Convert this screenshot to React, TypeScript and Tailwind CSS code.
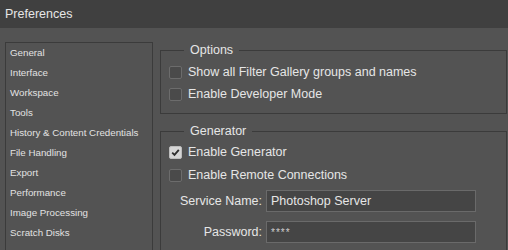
import { ReactNode } from 'react'

const sections = [
    'General',
    'Interface',
    'Workspace',
    'Tools',
    'History & Content Credentials',
    'File Handling',
    'Export',
    'Performance',
    'Image Processing',
    'Scratch Disks',
    'Type',
]

function Checkbox({ checked = false }: { checked?: boolean }) {
    return (
        <span
            className={
                checked
                    ? 'flex h-[13px] w-[13px] shrink-0 items-center justify-center rounded-[2px] border border-[#bdbdbd] bg-[#d6d6d6]'
                    : 'flex h-[13px] w-[13px] shrink-0 items-center justify-center rounded-[2px] border border-[#6c6c6c] bg-[#4a4a4a]'
            }
        >
            {checked && (
                <svg width="9" height="9" viewBox="0 0 9 9" fill="none">
                    <path d="M1.2 4.6 L3.5 6.9 L7.8 1.8" stroke="#2e2e2e" strokeWidth="1.8" />
                </svg>
            )}
        </span>
    )
}

function CheckRow({ label, checked }: { label: string; checked?: boolean }) {
    return (
        <label className="flex h-[22px] items-center gap-[6px]">
            <Checkbox checked={checked} />
            <span>{label}</span>
        </label>
    )
}

function Group({ title, children, className }: { title: string; children: ReactNode; className?: string }) {
    return (
        <fieldset className={'border border-[#3b3b3b] pl-[8px] ' + (className ?? '')}>
            <legend className="ml-[15px] px-[6px] leading-[16px]">{title}</legend>
            {children}
        </fieldset>
    )
}

function Field({ label, value, small }: { label: string; value: string; small?: boolean }) {
    return (
        <div className="flex items-center">
            <span className="w-[97px] shrink-0 pr-[4px] text-right">{label}</span>
            <div
                className={
                    'flex h-[22px] w-[210px] items-center border border-[#6a6a6a] bg-[#454545] pl-[4px] ' +
                    (small ? 'text-[10px] tracking-[1px] text-[#cfcfcf]' : '')
                }
            >
                {value}
            </div>
        </div>
    )
}

export default function App() {
    return (
        <div
            className="flex h-[250px] w-[508px] flex-col overflow-hidden bg-[#535353] text-[#e6e6e6]"
            style={{ fontFamily: '"Liberation Sans", Arial, sans-serif' }}
        >
            <div className="flex h-[28px] shrink-0 items-center bg-[#404040] pl-[5px] text-[12.5px]">
                Preferences
            </div>
            <div className="flex flex-1 pt-[14px] pl-[5px] pr-[1px]">
                <nav className="w-[148px] shrink-0 border border-b-0 border-[#3b3b3b] pl-[4px] text-[9.75px] text-[#e2e2e2]">
                    {sections.map((s) => (
                        <div key={s} className="flex h-[20px] items-center">
                            {s}
                        </div>
                    ))}
                </nav>
                <div className="ml-[7px] flex flex-1 flex-col text-[12.5px]">
                    <Group title="Options" className="pt-[3px] pb-[8px]">
                        <CheckRow label="Show all Filter Gallery groups and names" />
                        <CheckRow label="Enable Developer Mode" />
                    </Group>
                    <Group title="Generator" className="mt-[9px] flex-1">
                        <div className="flex flex-col gap-[1px] pt-[2px]">
                            <CheckRow label="Enable Generator" checked />
                            <CheckRow label="Enable Remote Connections" />
                        </div>
                        <div className="mt-[4px] flex flex-col gap-[9px]">
                            <Field label="Service Name:" value="Photoshop Server" />
                            <Field label="Password:" value="****" small />
                        </div>
                    </Group>
                </div>
            </div>
        </div>
    )
}
